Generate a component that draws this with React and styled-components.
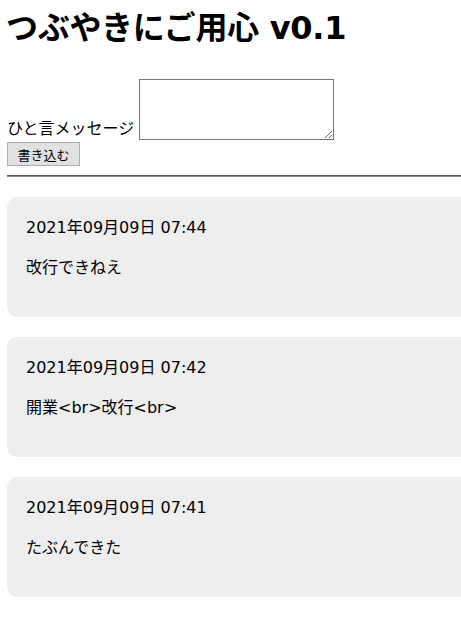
import styled, { createGlobalStyle } from 'styled-components';

const GlobalStyle = createGlobalStyle`
  html, body {
    margin: 0;
    padding: 0;
    overflow: hidden;
    background: #fff;
  }
  body {
    font-family: "DejaVu Sans", "Noto Sans CJK JP", sans-serif;
    color: #000;
  }
`;

const Page = styled.div`
  width: 640px;
  padding-left: 7px;
`;

const Title = styled.h1`
  font-size: 32px;
  font-weight: 700;
  line-height: 40px;
  margin: 8px 0 0 -1px;
  letter-spacing: -0.3px;
`;

const Form = styled.form`
  display: flex;
  flex-direction: column;
  align-items: flex-start;
  margin-top: 31px;
`;

const Row = styled.div`
  display: flex;
  align-items: flex-end;
  gap: 5px;
  font-size: 16px;
`;

const Label = styled.label`
  line-height: 20px;
  margin-bottom: 1px;
`;

const Message = styled.textarea`
  width: 195px;
  height: 61px;
  box-sizing: border-box;
  border: 1px solid #767676;
  border-radius: 0;
  padding: 2px;
  font-family: inherit;
  font-size: 13px;
`;

const Submit = styled.button`
  margin-top: 2px;
  width: 73px;
  height: 24px;
  padding: 0;
  background: #e1e1e1;
  border: 1px solid #adadad;
  border-radius: 0;
  font-family: "DejaVu Sans", "Noto Sans CJK JP", sans-serif;
  font-size: 13px;
  color: #000;
`;

const Rule = styled.hr`
  margin: 9px 0 20px;
  height: 0;
  border: none;
  border-top: 1px solid #5a5a5a;
  border-bottom: 1px solid #8a8a8a;
`;

const List = styled.div`
  display: flex;
  flex-direction: column;
  gap: 20px;
`;

const Card = styled.div`
  background: #eeeeee;
  border-radius: 10px;
  height: 120px;
  box-sizing: border-box;
  padding: 20px 19px;
  font-size: 16px;
`;

const Stamp = styled.div`
  line-height: 22px;
`;

const Body = styled.div`
  margin-top: 18px;
  line-height: 22px;
`;

const posts = [
  { at: '2021年09月09日 07:44', text: '改行できねえ' },
  { at: '2021年09月09日 07:42', text: '開業<br>改行<br>' },
  { at: '2021年09月09日 07:41', text: 'たぶんできた' },
];

export default function App() {
  return (
    <Page>
      <GlobalStyle />
      <Title>つぶやきにご用心 v0.1</Title>
      <Form onSubmit={(e) => e.preventDefault()}>
        <Row>
          <Label htmlFor="msg">ひと言メッセージ</Label>
          <Message id="msg" />
        </Row>
        <Submit type="submit">書き込む</Submit>
      </Form>
      <Rule />
      <List>
        {posts.map((p, i) => (
          <Card key={i}>
            <Stamp>{p.at}</Stamp>
            <Body>{p.text}</Body>
          </Card>
        ))}
      </List>
    </Page>
  );
}
